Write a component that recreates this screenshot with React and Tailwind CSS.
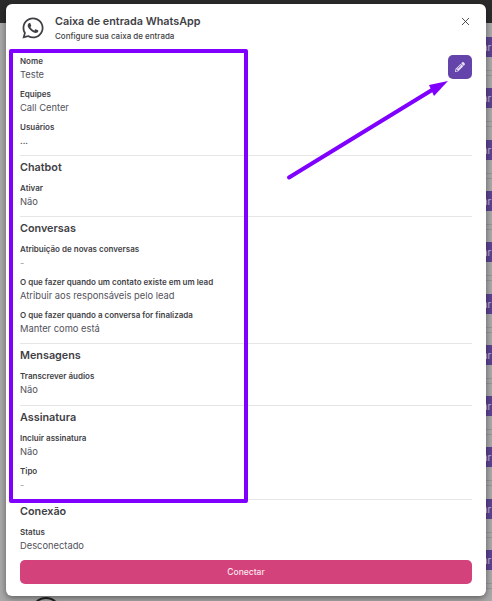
import { X } from "lucide-react";
import { FaPencilAlt, FaWhatsapp } from "react-icons/fa";

const font = { fontFamily: "Inter, sans-serif" };

/* tags and lines of the table behind the modal */
const backgroundRows = [37, 88, 140, 191, 242, 294, 345, 396, 447, 499, 550];

function Field({ label, value, className = "" }) {
  return (
    <div className={className}>
      <div className="text-[8px] leading-[12px] font-semibold text-[#3f3f46]">{label}</div>
      <div className={`mt-[1px] text-[9.33px] leading-[14px] ${value === "-" ? "text-[#a1a1aa]" : "text-[#52525b]"}`}>{value}</div>
    </div>
  );
}

function Section({ title, children }) {
  return (
    <div className="border-t border-[#e5e5e5] pt-[3px]">
      <h3 className="text-[10.8px] leading-[18px] font-semibold text-[#3f3f46]">{title}</h3>
      {children}
    </div>
  );
}

export default function App() {
  return (
    <div style={font} className="relative h-[601px] w-[492px] overflow-hidden bg-[#a8a8a8]">
      {/* page behind the modal */}
      <div className="h-[23px] bg-[#2b2b2b]" />
      {backgroundRows.map((top) => (
        <div key={top} className="absolute right-0 w-[8px]" style={{ top }}>
          <div className="flex h-[20px] items-center bg-[#5b4390] text-[10px] text-[#c9bedf]">
            <span className="-ml-[2px]">ar</span>
          </div>
          <div className="mt-[13px] h-px bg-[#969696]" />
          <div className="mt-[4px] h-px bg-[#969696]" />
        </div>
      ))}
      <div className="absolute top-[597px] left-[31px] h-[30px] w-[30px] rounded-full border-2 border-[#222]" />

      {/* modal */}
      <div className="absolute top-[4px] left-[6px] flex h-[592px] w-[480px] flex-col rounded-[6px] bg-white px-[14px] shadow-[0_2px_6px_rgba(0,0,0,0.45)]">
        <header className="flex h-[46px] items-center pt-[2px]">
          <FaWhatsapp className="mr-[10px] ml-[1px] size-[24px] text-[#3f3f46]" />
          <div>
            <div className="text-[10.8px] leading-[16px] font-semibold text-[#3f3f46]">Caixa de entrada WhatsApp</div>
            <div className="text-[8px] leading-[12px] font-medium text-[#3f3f46]">Configure sua caixa de entrada</div>
          </div>
          <button className="mb-[14px] ml-auto text-[#27272a]">
            <X size={13} strokeWidth={1.5} />
          </button>
        </header>

        <div className="flex items-start justify-between pt-[5px]">
          <div>
            <Field label="Nome" value="Teste" />
            <Field label="Equipes" value="Call Center" className="mt-[6px]" />
            <Field label="Usuários" value="..." className="mt-[6px]" />
          </div>
          <button className="flex size-[24px] items-center justify-center rounded-[5px] bg-[#6444ab] text-[#e6def5]">
            <FaPencilAlt size={10} />
          </button>
        </div>

        <div className="mt-[7px] flex flex-col">
          <Section title="Chatbot">
            <Field label="Ativar" value="Não" className="mt-[5px] pb-[7px]" />
          </Section>
          <Section title="Conversas">
            <Field label="Atribuição de novas conversas" value="-" className="mt-[5px]" />
            <Field label="O que fazer quando um contato existe em um lead" value="Atribuir aos responsáveis pelo lead" className="mt-[6px]" />
            <Field label="O que fazer quando a conversa for finalizada" value="Manter como está" className="mt-[6px] pb-[7px]" />
          </Section>
          <Section title="Mensagens">
            <Field label="Transcrever áudios" value="Não" className="mt-[5px] pb-[8px]" />
          </Section>
          <Section title="Assinatura">
            <Field label="Incluir assinatura" value="Não" className="mt-[5px]" />
            <Field label="Tipo" value="-" className="mt-[6px] pb-[7px]" />
          </Section>
          <Section title="Conexão">
            <Field label="Status" value="Desconectado" className="mt-[5px]" />
          </Section>
        </div>

        <button className="mt-[7px] h-[24px] w-full rounded-[5px] bg-[#d3427b] text-[8.5px] font-medium text-[#fbe7ef]">
          Conectar
        </button>
      </div>

      {/* annotation over the screenshot */}
      <div className="absolute top-[49px] left-[9px] h-[454px] w-[239px] rounded-[2px] border-[4px] border-[#7f00ff]" />
      <svg className="absolute top-0 left-0" width="492" height="601" viewBox="0 0 492 601">
        <line x1="289" y1="177.5" x2="432" y2="90" stroke="#7f00ff" strokeWidth="4" strokeLinecap="round" />
        <polygon points="448,81 429,85 434,96" fill="#7f00ff" />
      </svg>
    </div>
  );
}
